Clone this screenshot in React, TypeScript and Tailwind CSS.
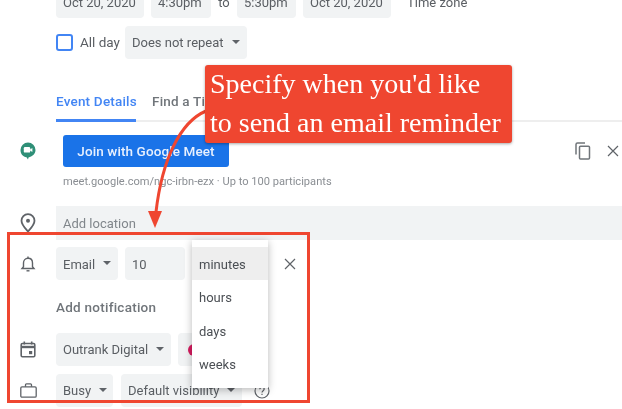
import { ReactNode } from "react";

const Caret = () => (
  <span className="ml-[8px] -mt-[1px] w-0 h-0 border-x-[4px] border-x-transparent border-t-[4px] border-t-[#5f6368]"></span>
);

const Chip = ({ w, children, caret, low }: { w: string; children?: ReactNode; caret?: boolean; low?: boolean }) => (
  <div className={`${w} h-[33px] shrink-0 flex items-center px-[7px] bg-[#f1f3f4] rounded-[4px] text-[13px] text-[#5a5e63]`}>
    <span className={low ? "whitespace-nowrap pt-[3px]" : "whitespace-nowrap pt-[1px]"}>{children}</span>
    {caret && <Caret />}
  </div>
);

const Row = ({ icon, className, children }: { icon?: ReactNode; className: string; children: ReactNode }) => (
  <div className={`flex items-center ${className}`}>
    <div className="w-[56px] shrink-0 flex justify-center">{icon}</div>
    {children}
  </div>
);

const PinIcon = () => (
  <svg width="16" height="20" viewBox="0 0 16 20" fill="none" stroke="#5f6368" strokeWidth="1.8">
    <path d="M8 1.200c-3.700 0-6.500 2.800-6.500 6.500 0 4 4.300 8.300 6.500 10.800 2.200-2.500 6.500-6.800 6.500-10.800 0-3.700-2.800-6.500-6.500-6.500z" />
    <circle cx="8" cy="7.700" r="2" fill="#5f6368" stroke="none" />
  </svg>
);

const BellIcon = () => (
  <svg width="16" height="18" viewBox="0 0 16 18" fill="none" stroke="#5f6368" strokeWidth="1.4">
    <path d="M2 13.500h12l-1.500-1.800V8c0-2.700-1.800-4.700-4.500-4.700S3.500 5.300 3.500 8v3.700z" />
    <path d="M8 1.500v1.800" />
    <path d="M6.500 15.800h3" />
  </svg>
);

const CalendarIcon = () => (
  <svg width="16" height="17" viewBox="0 0 16 17" fill="none">
    <rect x="1.200" y="2.500" width="13.600" height="13.300" rx="1.200" stroke="#5f6368" strokeWidth="1.600" />
    <path d="M1 6h14" stroke="#5f6368" strokeWidth="2.400" />
    <path d="M4.300 0.500v3M11.700 0.500v3" stroke="#5f6368" strokeWidth="1.600" />
    <rect x="9" y="10" width="3.200" height="3.200" fill="#5f6368" />
  </svg>
);

const BriefcaseIcon = () => (
  <svg width="17" height="15" viewBox="0 0 17 15" fill="none" stroke="#5f6368" strokeWidth="1.300">
    <rect x="0.800" y="3.800" width="15.400" height="10.400" rx="1.200" />
    <path d="M5.500 3.800V1.800c0-.6.400-1 1-1h4c.6 0 1 .4 1 1v2" />
  </svg>
);

const MeetIcon = () => (
  <svg width="16" height="18" viewBox="0 0 16 18">
    <path d="M8 .5a7.500 7.500 0 0 1 7.500 7.500c0 4-3.500 6.800-7 7.400L8 17.500l-1.500-2.200C3 14.700.5 12 .5 8A7.500 7.500 0 0 1 8 .5z" fill="#2f8f77" />
    <rect x="3.800" y="5" width="6.400" height="5.600" rx="1.200" fill="#fff" />
    <path d="M10 7.500l2.400-1.600v4.200L10 8.600z" fill="#fff" />
  </svg>
);

const CopyIcon = () => (
  <svg width="16" height="18" viewBox="0 0 16 18" fill="none" stroke="#70757a" strokeWidth="1.500">
    <path d="M1 12.500V2.500c0-.8.500-1.500 1.500-1.500H10" />
    <rect x="4.500" y="4.300" width="10" height="12.700" rx="1" />
  </svg>
);

const CloseIcon = ({ size }: { size: number }) => (
  <svg width={size} height={size} viewBox="0 0 12 12" fill="none" stroke="#5f6368" strokeWidth="1.200">
    <path d="M1 1l10 10M11 1L1 11" />
  </svg>
);

const HelpIcon = () => (
  <svg width="16" height="16" viewBox="0 0 16 16" fill="none" stroke="#5f6368" strokeWidth="1.200" className="ml-[12px]">
    <circle cx="8" cy="8" r="7" />
    <path d="M5.800 6.200c0-1.300 1-2.100 2.200-2.100s2.200.8 2.200 2c0 1.500-2.200 1.700-2.200 3.400" />
    <path d="M8 10.800v1.200" />
  </svg>
);

const App = () => (
  <div className="relative w-[622px] h-[409px] overflow-hidden bg-white blur-[0.5px] font-['Roboto',_sans-serif]">
    <div className="-mt-[15px]">
      <Row className="h-[33px]">
        <Chip w="w-[88px]" low>Oct 20, 2020</Chip>
        <div className="w-[7px]"></div>
        <Chip w="w-[60px]" low>4:30pm</Chip>
        <span className="w-[26px] text-center pt-[3px] text-[13px] text-[#5a5e63]">to</span>
        <Chip w="w-[59px]" low>5:30pm</Chip>
        <div className="w-[7px]"></div>
        <Chip w="w-[88px]" low>Oct 20, 2020</Chip>
        <span className="ml-[16px] pt-[3px] text-[13px] text-[#5a5e63]">Time zone</span>
      </Row>

      <Row className="h-[33px] mt-[8px]">
        <div className="w-[17px] h-[17px] -mt-[1px] rounded-[3px] border-2 border-[#4285f4]"></div>
        <span className="ml-[7px] w-[45px] -mt-[1px] text-[13.5px] text-[#5a5e63]">All day</span>
        <Chip w="w-[122px]" caret>Does not repeat</Chip>
      </Row>

      <div className="mt-[31px] ml-[56px] h-[32px] border-b-[2px] border-[#eeeeee] flex text-[13.5px] tracking-[0.2px] font-medium">
        <div className="w-[80px] h-[32px] pt-[1px] border-b-[3px] border-[#4285f4] text-[#4285f4] whitespace-nowrap">Event Details</div>
        <div className="ml-[16px] pt-[1px] text-[#70757a] whitespace-nowrap">Find a Time</div>
      </div>

      <Row icon={<MeetIcon />} className="mt-[13px] h-[32px]">
        <button className="ml-[7px] w-[166px] h-[32px] rounded-[3px] bg-[#1a73e8] text-[#e8f0fe] text-[13.5px] tracking-[0.1px] font-medium text-center">
          Join with Google Meet
        </button>
        <div className="ml-auto mr-[3px] flex items-center gap-[16px]">
          <CopyIcon />
          <CloseIcon size={12} />
        </div>
      </Row>

      <div className="ml-[63px] mt-[7px] h-[16px] text-[11.1px] leading-[16px] text-[#8a8e93] whitespace-nowrap">
        meet.google.com/ngc-irbn-ezx · Up to 100 participants
      </div>

      <Row icon={<PinIcon />} className="mt-[16px] h-[34px]">
        <div className="flex-1 h-[34px] flex items-center px-[7px] pt-[1px] bg-[#f1f3f4] text-[13px] text-[#80868b]">Add location</div>
      </Row>

      <Row icon={<BellIcon />} className="mt-[7px] h-[33px]">
        <Chip w="w-[62px]" caret low>Email</Chip>
        <div className="w-[7px]"></div>
        <Chip w="w-[60px]" low>10</Chip>
        <div className="ml-[99px]">
          <CloseIcon size={12} />
        </div>
      </Row>

      <div className="ml-[56px] mt-[18px] h-[18px] text-[13.5px] leading-[18px] tracking-[0.25px] font-medium text-[#70757a]">Add notification</div>

      <Row icon={<CalendarIcon />} className="mt-[17px] h-[33px]">
        <Chip w="w-[115px]" caret>Outrank Digital</Chip>
        <div className="w-[7px]"></div>
        <div className="w-[60px] h-[33px] pl-[10px] flex items-center bg-[#f1f3f4] rounded-[4px]">
          <span className="w-[12px] h-[12px] rounded-full bg-[#d81b60]"></span>
        </div>
      </Row>

      <Row icon={<BriefcaseIcon />} className="mt-[8px] h-[33px]">
        <Chip w="w-[57px]" caret>Busy</Chip>
        <div className="w-[8px]"></div>
        <Chip w="w-[121px]" caret>Default visibility</Chip>
        <HelpIcon />
      </Row>
    </div>

    {/* annotation overlays */}
    <div className="absolute left-[7px] top-[232px] w-[303px] h-[171px] border-[3px] border-[#ef4630]"></div>

    <div className="absolute left-[192px] top-[240px] w-[76px] h-[148px] pt-[7px] bg-white shadow-[0_2px_8px_rgba(0,0,0,0.28)] text-[13px] text-[#4b4f54]">
      <div className="h-[33px] pl-[7px] pt-[2px] flex items-center bg-[#eeeeee]">minutes</div>
      <div className="h-[33.500px] pl-[7px] pt-[2px] flex items-center">hours</div>
      <div className="h-[33.500px] pl-[7px] pt-[2px] flex items-center">days</div>
      <div className="h-[33.500px] pl-[7px] pt-[2px] flex items-center">weeks</div>
    </div>

    <svg className="absolute left-0 top-0" width="622" height="409" viewBox="0 0 622 409" fill="none">
      <path d="M206 111C180 122 162 160 156 212" stroke="#ef4630" strokeWidth="3" />
      <path d="M148 211h14l-7 17z" fill="#ef4630" />
    </svg>

    <div className="absolute left-[205px] top-[65px] w-[307px] h-[78px] px-[5px] rounded-[3px] bg-[#ef4630] shadow-[0_1px_3px_rgba(0,0,0,0.35)] font-['Liberation_Serif',_serif] text-[28px] leading-[39px] text-white whitespace-nowrap">
      <div className="-mt-[1px]">Specify when you'd like</div>
      <div>to send an email reminder</div>
    </div>
  </div>
);

export default App;
